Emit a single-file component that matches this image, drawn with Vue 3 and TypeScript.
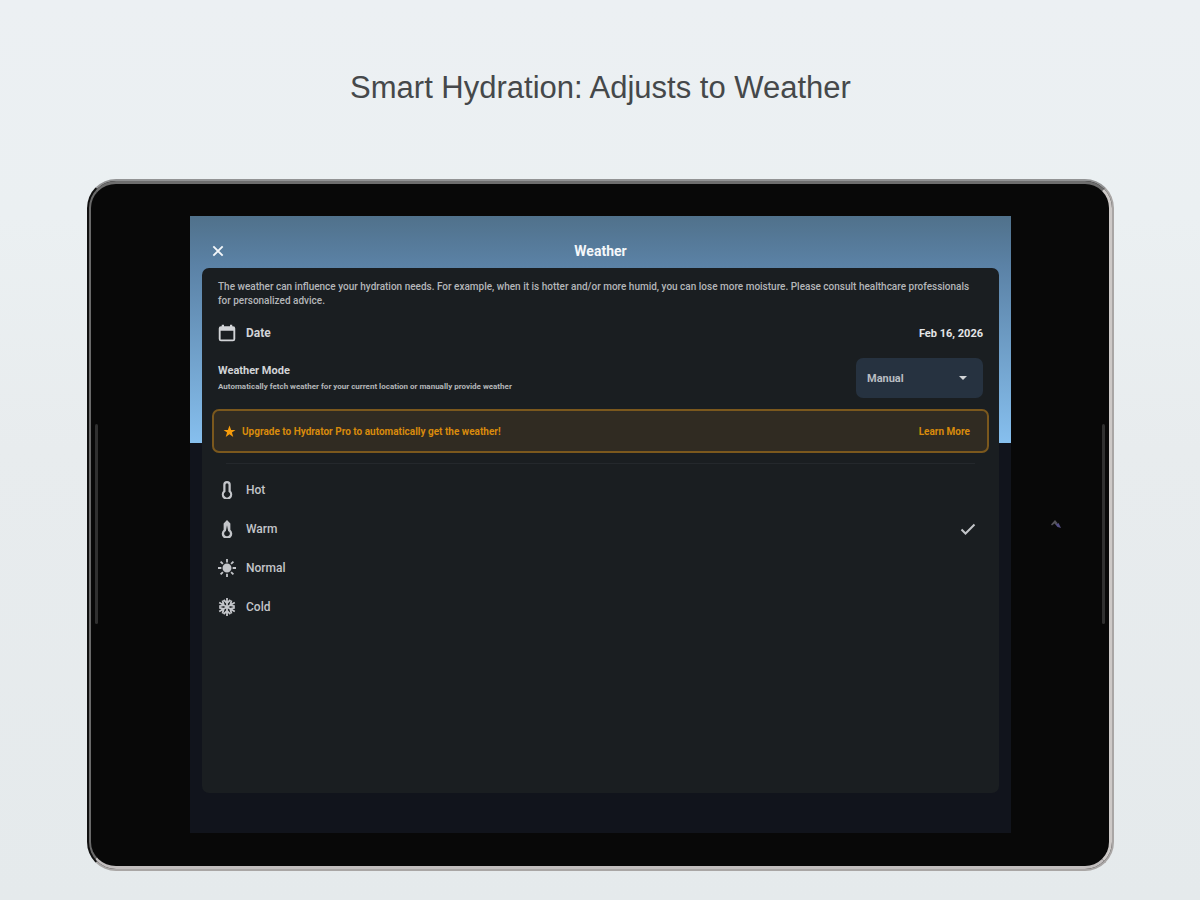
<script setup lang="ts">
import { ref } from 'vue'

type Icon = 'hot' | 'warm' | 'normal' | 'cold'

const mode = ref('Manual')
const selected = ref<Icon>('warm')
const conditions: { id: Icon; label: string }[] = [
  { id: 'hot', label: 'Hot' },
  { id: 'warm', label: 'Warm' },
  { id: 'normal', label: 'Normal' },
  { id: 'cold', label: 'Cold' },
]
const iconPaths: Record<Icon, string> = {
  hot: 'M12 0a5 5 0 0 0-5 5v8a7 7 0 1 0 10 0V5a5 5 0 0 0-5-5zm0 3a2 2 0 0 1 2 2v9.300l.8.8a4 4 0 1 1-5.600 0l.8-.8V5a2 2 0 0 1 2-2z',
  warm: 'M12 0 7.500 4.500V13a7 7 0 1 0 9 0V4.500zM12 7l1.500 7.500a3.800 3.800 0 1 1-3 0z',
  normal:
    'M12 6a6 6 0 1 0 0 12 6 6 0 0 0 0-12zM10.800 0h2.400v4.500h-2.400zM10.800 19.500h2.400V24h-2.400zM0 10.800h4.500v2.400H0zM19.500 10.800H24v2.400h-4.500zM4.300 2.600l3.100 3.100-1.700 1.700-3.100-3.100zM18.300 16.600l3.100 3.100-1.700 1.700-3.100-3.100zM19.700 2.600l1.700 1.700-3.100 3.100-1.700-1.700zM5.700 16.600l1.700 1.700-3.100 3.100-1.700-1.700z',
  cold: 'M12 0v24M7.500 2.500 12 7l4.500-4.500M7.500 21.500 12 17l4.500 4.500',
}
</script>

<template>
  <main class="page">
    <h1 class="headline">Smart Hydration: Adjusts to Weather</h1>

    <div class="device">
      <div class="bezel">
        <span class="slit slit-left"></span>
        <span class="slit slit-right"></span>
        <svg class="camera" viewBox="0 0 10 10" aria-hidden="true">
          <path d="M0 5.500 4 1l2.500 3L5 6 3.500 4.500 1 6.500z" fill="#55535a" />
          <path d="M4.500 5.500 7.500 4 10 9 6.500 8z" fill="#544f83" />
        </svg>

        <div class="screen">
          <header class="app-bar">
            <button class="close" type="button" aria-label="Close">
              <svg viewBox="0 0 12 12"><path d="M2 2l8 8M10 2l-8 8" stroke="currentColor" stroke-width="1.600" /></svg>
            </button>
            <h2 class="app-title">Weather</h2>
          </header>

          <section class="card">
            <p class="intro">
              The weather can influence your hydration needs. For example, when it is hotter and/or more humid, you can
              lose more moisture. Please consult healthcare professionals for personalized advice.
            </p>

            <button class="date-row" type="button">
              <svg class="icon" viewBox="0 0 24 24" aria-hidden="true">
                <path
                  fill="currentColor"
                  fill-rule="evenodd"
                  d="M20 3h-1V1h-3v2H8V1H5v2H4a3 3 0 0 0-3 3v14a3 3 0 0 0 3 3h16a3 3 0 0 0 3-3V6a3 3 0 0 0-3-3zm.500 17.500h-17V9h17z"
                />
              </svg>
              <span class="date-label">Date</span>
              <time class="date" datetime="2026-02-16">Feb 16, 2026</time>
            </button>

            <div class="mode-row">
              <div>
                <label class="mode-label" for="mode">Weather Mode</label>
                <p class="mode-hint">Automatically fetch weather for your current location or manually provide weather</p>
              </div>
              <div class="select-wrap">
                <select id="mode" v-model="mode" class="select">
                  <option>Manual</option>
                  <option>Automatic</option>
                </select>
                <svg class="caret" viewBox="0 0 8 4" aria-hidden="true"><path d="M0 0h8L4 4z" fill="currentColor" /></svg>
              </div>
            </div>

            <div class="upgrade">
              <svg class="star" viewBox="0 0 24 24" aria-hidden="true">
                <path fill="currentColor" d="M12 1l3 8h8l-6.500 5L19 22l-7-4.800L5 22l2.500-8L1 9h8z" />
              </svg>
              <span>Upgrade to Hydrator Pro to automatically get the weather!</span>
              <a class="learn" href="#">Learn More</a>
            </div>

            <hr class="divider" />

            <div role="radiogroup" aria-label="Weather">
              <label v-for="item in conditions" :key="item.id" class="condition">
                <input v-model="selected" class="radio" type="radio" name="condition" :value="item.id" />
                <svg class="icon" viewBox="0 0 24 24" aria-hidden="true">
                  <g v-if="item.id === 'cold'" fill="none" stroke="currentColor" stroke-width="2.400">
                    <path v-for="turn in [0, 60, 120]" :key="turn" :d="iconPaths.cold" :transform="`rotate(${turn} 12 12)`" />
                  </g>
                  <path v-else fill="currentColor" fill-rule="evenodd" :d="iconPaths[item.id]" />
                </svg>
                <span>{{ item.label }}</span>
                <svg v-if="selected === item.id" class="check" viewBox="0 0 16 12" aria-hidden="true">
                  <path d="M1.500 6.500 5.500 10.500 14.500 1.500" fill="none" stroke="currentColor" stroke-width="2" />
                </svg>
              </label>
            </div>
          </section>
        </div>
      </div>
    </div>
  </main>
</template>

<style>
body {
  margin: 0;
}
</style>

<style scoped>
.page {
  box-sizing: border-box;
  min-height: 100vh;
  display: flex;
  flex-direction: column;
  padding: 68px 86px 29px 87px;
  background: linear-gradient(#ecf0f3, #ebf0f2 24%, #e8ecee 50%, #e5eaec);
  font-family: Roboto, 'Liberation Sans', sans-serif;
}

.headline {
  margin: 0 0 71px;
  text-align: center;
  font: 400 31px/40px 'Liberation Sans', Arial, sans-serif;
  color: #45484a;
}

.device {
  flex: 1;
  display: flex;
  border: 2px solid;
  border-color: #929394 #a9a6a5 #a9a6a5 #101010;
  border-radius: 29px;
  background: #080808;
}

.bezel {
  position: relative;
  flex: 1;
  display: flex;
  padding: 32px 98px 33px 99px;
  border: 3px solid;
  border-width: 3px 3px 3px 2px;
  border-color: #6e6e6e #cdc9c7 #c2bebe #6a6a6a;
  border-radius: 27px;
  background: #080808;
}

.slit {
  position: absolute;
  top: 240px;
  width: 3px;
  height: 200px;
  border-radius: 2px;
  background: #303030;
}

.slit-left {
  left: 4px;
}

.slit-right {
  right: 4px;
}

.camera {
  position: absolute;
  top: 335px;
  right: 48px;
  width: 10px;
  height: 10px;
}

.screen {
  flex: 1;
  display: flex;
  flex-direction: column;
  padding: 0 12px 40px;
  background: linear-gradient(#50718b, #5b82a6 50px, #86bfee 227px, #11141c 227px);
  color: #d2d4d7;
}

.app-bar {
  display: grid;
  grid-template-columns: 32px 1fr 32px;
  align-items: center;
  height: 34px;
  padding-top: 18px;
}

.close {
  display: flex;
  justify-content: center;
  padding: 0;
  border: 0;
  background: none;
  color: #f4f7fa;
}

.close svg {
  width: 14px;
  height: 14px;
}

.app-title {
  margin: 0;
  text-align: center;
  font-size: 14px;
  font-weight: 700;
  color: #f4f7fa;
}

.card {
  flex: 1;
  padding: 12px 10px;
  border-radius: 7px;
  background: #1a1e21;
  font-size: 11px;
  font-weight: 700;
}

.intro {
  margin: 0 6px 7px;
  font-size: 10px;
  font-weight: 500;
  line-height: 14px;
  color: #b4b6b9;
}

.icon {
  width: 18px;
  height: 18px;
  flex: none;
}

.date-row {
  display: flex;
  align-items: center;
  gap: 10px;
  width: 100%;
  height: 36px;
  padding: 0 6px;
  border: 0;
  background: none;
  color: inherit;
  font: inherit;
}

.date-label {
  font-size: 12px;
}

.date {
  margin-left: auto;
  color: #e4e5e7;
}

.mode-row {
  display: flex;
  align-items: center;
  justify-content: space-between;
  height: 54px;
  padding: 0 6px;
}

.mode-label {
  display: block;
  line-height: 16px;
}

.mode-hint {
  margin: 0;
  font-size: 8px;
  line-height: 15px;
  color: #b4b6b9;
}

.select-wrap {
  position: relative;
  width: 127px;
}

.select {
  appearance: none;
  width: 100%;
  height: 40px;
  padding: 0 11px;
  border: 0;
  border-radius: 7px;
  background: #263240;
  color: #b9bdc2;
  font: inherit;
}

.caret {
  position: absolute;
  top: 18px;
  right: 16px;
  width: 8px;
  height: 4px;
  pointer-events: none;
}

.upgrade {
  box-sizing: border-box;
  display: flex;
  align-items: center;
  gap: 6px;
  height: 44px;
  margin-top: 4px;
  padding: 0 17px 0 9px;
  border: 2px solid #7b581d;
  border-radius: 7px;
  background: #302b22;
  color: #d88a0c;
  font-size: 10px;
}

.star {
  width: 13px;
  height: 13px;
  color: #f79c0b;
}

.learn {
  margin-left: auto;
  color: inherit;
  text-decoration: none;
}

.divider {
  height: 1px;
  margin: 10px 14px 6px;
  border: 0;
  background: #24282c;
}

.condition {
  position: relative;
  display: flex;
  align-items: center;
  gap: 10px;
  height: 39px;
  padding: 0 13px 0 6px;
  color: #c3c5c9;
  font-size: 12px;
  font-weight: 500;
}

.radio {
  position: absolute;
  opacity: 0;
  pointer-events: none;
}

.check {
  width: 16px;
  height: 12px;
  margin-left: auto;
}
</style>
